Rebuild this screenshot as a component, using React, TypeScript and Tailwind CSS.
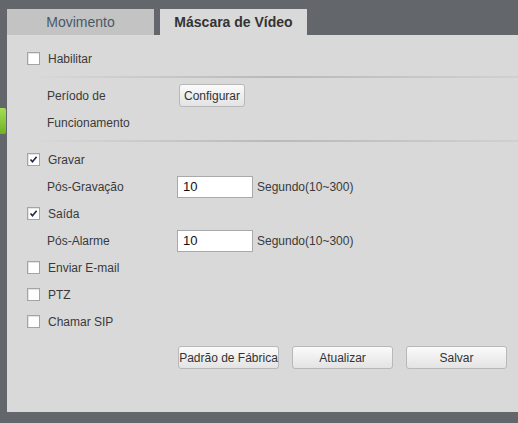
import React from 'react';

// --- Small pieces ---

const Checkbox: React.FC<{ checked?: boolean }> = ({ checked }) => (
  <span className="w-[13px] h-[13px] bg-white border border-[#a4a4a4] shadow-[inset_1px_1px_0_#e4e4e4] flex items-center justify-center shrink-0">
    {checked && (
      <svg width="9" height="9" viewBox="0 0 9 9">
        <path d="M1.5 4.5 L3.5 6.8 L7.6 1.8" fill="none" stroke="#1f2a44" strokeWidth="1.6" />
      </svg>
    )}
  </span>
);

const Separator: React.FC = () => (
  <div className="h-[10px] flex items-center pl-[22px]">
    <div className="h-[2px] w-full bg-gradient-to-r from-[#d9d9d9] via-[#b9b9b9] to-[#d0d0d0]" />
  </div>
);

const Btn: React.FC<{ label: string; className?: string }> = ({ label, className }) => (
  <button className={`h-[23px] rounded-[3px] border border-[#b8b8b8] bg-gradient-to-b from-[#fbfbfb] to-[#e3e3e3] text-[12px] text-[#333] ${className ?? ''}`}>
    {label}
  </button>
);

const CheckRow: React.FC<{ label: string; checked?: boolean }> = ({ label, checked }) => (
  <div className="h-[27px] flex items-center pl-[20px] gap-[8px]">
    <Checkbox checked={checked} />
    <span>{label}</span>
  </div>
);

const InputRow: React.FC<{ label: string; value: string }> = ({ label, value }) => (
  <div className="h-[27px] flex items-center pl-[40px]">
    <span className="w-[130px]">{label}</span>
    <div className="w-[76px] h-[22px] bg-white border border-[#a9a9a9] flex items-center pl-[5px] text-[13px] text-[#111]">
      {value}
    </div>
    <span className="ml-[4px]">Segundo(10~300)</span>
  </div>
);

const App: React.FC = () => {
  return (
    <div className="w-[518px] h-[423px] bg-[#63676b] relative overflow-hidden font-['Liberation_Sans',Arial,sans-serif] text-[12px] text-[#3a3a3a]">
      {/* Tabs */}
      <div className="flex pt-[9px] pl-[7px] gap-[6px]">
        <div className="w-[147px] h-[26px] bg-[#c3c3c3] flex items-center justify-center text-[14px] text-[#4a5866]">
          Movimento
        </div>
        <div className="w-[147px] h-[26px] bg-[#d9d9d9] flex items-center justify-center text-[14px] font-bold text-[#333]">
          Máscara de Vídeo
        </div>
      </div>

      {/* Panel */}
      <div className="ml-[7px] h-[377px] bg-[#d9d9d9] pt-[10px] flex flex-col">
        <CheckRow label="Habilitar" />
        <Separator />

        <div className="h-[27px] flex items-center pl-[40px]">
          <span className="w-[132px]">Período de</span>
          <Btn label="Configurar" className="w-[66px]" />
        </div>
        <div className="h-[27px] flex items-center pl-[40px]">Funcionamento</div>
        <Separator />

        <CheckRow label="Gravar" checked />
        <InputRow label="Pós-Gravação" value="10" />
        <CheckRow label="Saída" checked />
        <InputRow label="Pós-Alarme" value="10" />
        <CheckRow label="Enviar E-mail" />
        <CheckRow label="PTZ" />
        <CheckRow label="Chamar SIP" />

        <div className="flex gap-[13px] pl-[171px] mt-[11px]">
          <Btn label="Padrão de Fábrica" className="w-[101px]" />
          <Btn label="Atualizar" className="w-[101px]" />
          <Btn label="Salvar" className="w-[101px]" />
        </div>
      </div>

      {/* Side handle peeking in from the left */}
      <div className="absolute left-0 top-[108px] w-[6px] h-[26px] rounded-r-[2px] bg-gradient-to-b from-[#a6dd55] to-[#6fb21e]" />
    </div>
  );
};

export default App;
